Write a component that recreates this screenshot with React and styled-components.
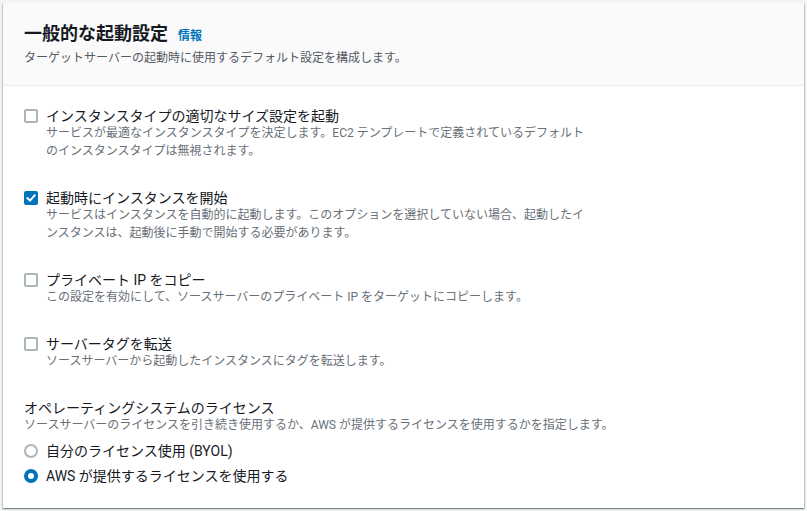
import React from "react";
import styled, { createGlobalStyle } from "styled-components";

const GlobalStyle = createGlobalStyle`
  html, body {
    margin: 0;
    padding: 0;
    background: #f2f3f3;
  }
  body {
    font-family: Roboto, "Noto Sans CJK JP", sans-serif;
    color: #16191f;
  }
`;

const Page = styled.div`
  padding: 3px;
`;

const Panel = styled.section`
  background: #ffffff;
  height: 505px;
  box-sizing: border-box;
  box-shadow: 0 1px 1px 0 rgba(0, 28, 36, 0.3), 1px 1px 1px 0 rgba(0, 28, 36, 0.15),
    -1px 1px 1px 0 rgba(0, 28, 36, 0.15);
  display: flex;
  flex-direction: column;
`;

const Header = styled.header`
  background: #fafafa;
  border-bottom: 1px solid #eaeded;
  padding: 20px 20px 18px 21px;
`;

const TitleRow = styled.div`
  display: flex;
  align-items: baseline;
  gap: 10px;
`;

const Title = styled.h2`
  margin: 0;
  font-size: 18px;
  line-height: 22px;
  font-weight: 700;
  color: #16191f;
`;

const InfoLink = styled.a`
  font-size: 12px;
  font-weight: 700;
  color: #0073bb;
  text-decoration: none;
`;

const HeaderDesc = styled.p`
  margin: 4px 0 0;
  font-size: 12px;
  line-height: 18px;
  color: #545b64;
`;

const Body = styled.div`
  padding: 22px 20px 20px 21px;
  display: flex;
  flex-direction: column;
  gap: 30px;
`;

const Option = styled.label`
  display: grid;
  grid-template-columns: 14px 1fr;
  column-gap: 8px;
  align-items: start;
`;

const Box = styled.span`
  width: 14px;
  height: 14px;
  box-sizing: border-box;
  margin-top: 1px;
  border-radius: 2px;
  border: ${(p) => (p.checked ? "none" : "2px solid #aab7b8")};
  background: ${(p) => (p.checked ? "#0073bb" : "#fff")};
  display: flex;
  align-items: center;
  justify-content: center;
`;

const OptionText = styled.span`
  display: flex;
  flex-direction: column;
`;

const OptionLabel = styled.span`
  font-size: 14px;
  line-height: 16px;
  color: #16191f;
`;

const OptionDesc = styled.span`
  font-size: 12px;
  line-height: 18px;
  color: #687078;
  white-space: nowrap;
`;

const Field = styled.div`
  display: flex;
  flex-direction: column;
`;

const FieldLabel = styled.div`
  font-size: 14px;
  line-height: 16px;
  color: #16191f;
`;

const FieldDesc = styled.div`
  font-size: 12px;
  line-height: 18px;
  color: #687078;
`;

const RadioGroup = styled.div`
  display: flex;
  flex-direction: column;
  gap: 5px;
  margin-top: 7px;
`;

const RadioRow = styled.label`
  display: flex;
  align-items: center;
  gap: 8px;
  font-size: 14px;
  line-height: 20px;
  color: #16191f;
`;

const RadioDot = styled.span`
  width: 14px;
  height: 14px;
  box-sizing: border-box;
  border-radius: 50%;
  background: #fff;
  border: ${(p) => (p.checked ? "4px solid #0073bb" : "2px solid #aab7b8")};
`;

const Check = () => (
  <svg width="10" height="10" viewBox="0 0 10 10">
    <path d="M1.5 5.2 L4 7.6 L8.6 2.4" fill="none" stroke="#fff" strokeWidth="2" strokeLinecap="square" />
  </svg>
);

const options = [
  {
    label: "インスタンスタイプの適切なサイズ設定を起動",
    desc: [
      "サービスが最適なインスタンスタイプを決定します。EC2 テンプレートで定義されているデフォルト",
      "のインスタンスタイプは無視されます。",
    ],
    checked: false,
  },
  {
    label: "起動時にインスタンスを開始",
    desc: [
      "サービスはインスタンスを自動的に起動します。このオプションを選択していない場合、起動したイ",
      "ンスタンスは、起動後に手動で開始する必要があります。",
    ],
    checked: true,
  },
  {
    label: "プライベート IP をコピー",
    desc: ["この設定を有効にして、ソースサーバーのプライベート IP をターゲットにコピーします。"],
    checked: false,
  },
  {
    label: "サーバータグを転送",
    desc: ["ソースサーバーから起動したインスタンスにタグを転送します。"],
    checked: false,
  },
];

export default function App() {
  return (
    <Page>
      <GlobalStyle />
      <Panel>
        <Header>
          <TitleRow>
            <Title>一般的な起動設定</Title>
            <InfoLink href="#">情報</InfoLink>
          </TitleRow>
          <HeaderDesc>ターゲットサーバーの起動時に使用するデフォルト設定を構成します。</HeaderDesc>
        </Header>
        <Body>
          {options.map((o) => (
            <Option key={o.label}>
              <Box checked={o.checked}>{o.checked && <Check />}</Box>
              <OptionText>
                <OptionLabel>{o.label}</OptionLabel>
                {o.desc.map((line) => (
                  <OptionDesc key={line}>{line}</OptionDesc>
                ))}
              </OptionText>
            </Option>
          ))}
          <Field>
            <FieldLabel>オペレーティングシステムのライセンス</FieldLabel>
            <FieldDesc>
              ソースサーバーのライセンスを引き続き使用するか、AWS が提供するライセンスを使用するかを指定します。
            </FieldDesc>
            <RadioGroup>
              <RadioRow>
                <RadioDot />
                自分のライセンス使用 (BYOL)
              </RadioRow>
              <RadioRow>
                <RadioDot checked />
                AWS が提供するライセンスを使用する
              </RadioRow>
            </RadioGroup>
          </Field>
        </Body>
      </Panel>
    </Page>
  );
}
